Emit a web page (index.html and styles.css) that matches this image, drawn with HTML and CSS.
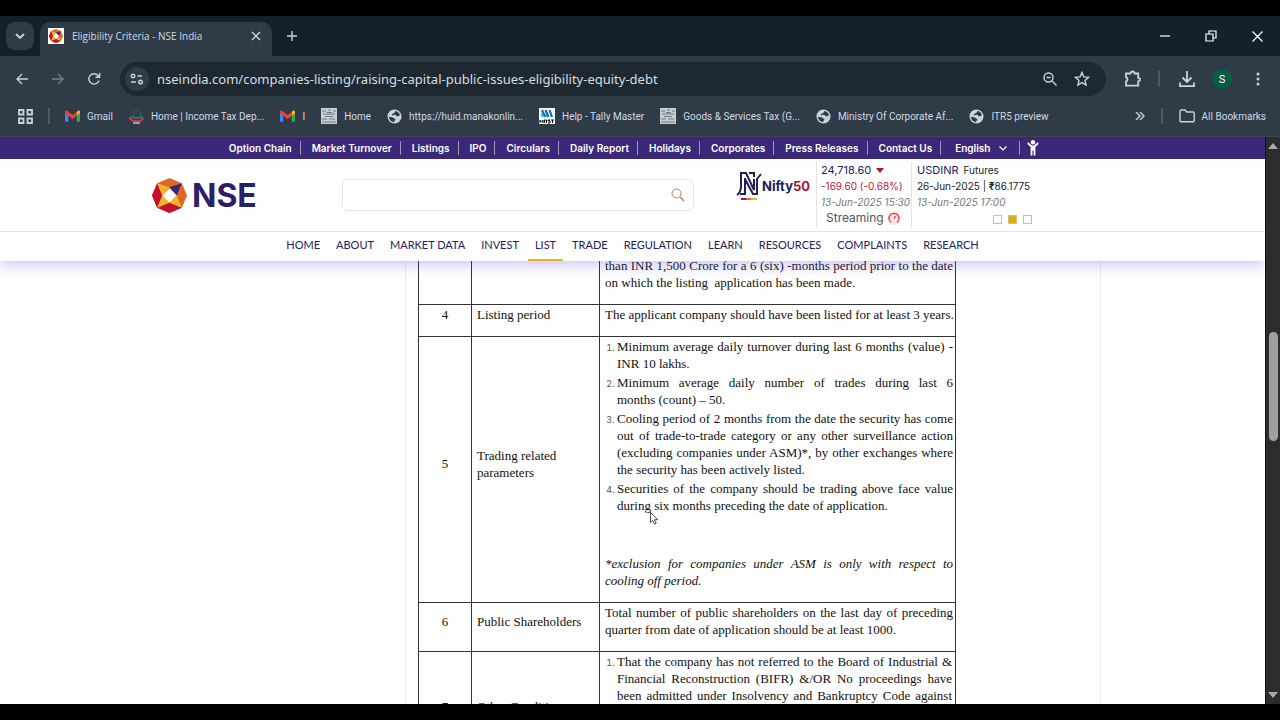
FILE: index.html
```html
<!DOCTYPE html>
<html lang="en">
<head>
<meta charset="utf-8">
<title>Eligibility Criteria - NSE India</title>
<link rel="stylesheet" href="styles.css">
</head>
<body>
<svg class="defs" aria-hidden="true">
  <symbol id="globe" viewBox="0 0 16 16"><circle cx="8" cy="8" r="7.5" fill="#c8d3df"/><path d="M9 2c2.600.4 4.400 2.200 4.800 4.600-1.200.6-2 1.400-3.400 1-1-.4-.8-1.400-2-1.400-1.600 0-1.800.8-3 .6C4.400 6.400 6 5.200 7 4.600 8 4 8.600 3.400 9 2zM2 8.600c1.600-.4 3.600-.2 4.600.6.8.8 1.800.6 2.200 1.400.4 1-.8 1.400-1.400 3.400C4.400 13.600 2.200 11.400 2 8.600z" fill="#303b48"/></symbol>
  <symbol id="gmail" viewBox="0 0 16 12"><path d="M0 1.500V11a1 1 0 0 0 1 1h2.500V4.500z" fill="#4285f4"/><path d="M16 1.500V11a1 1 0 0 1-1 1h-2.500V4.500z" fill="#34a853"/><path d="M12.500 1.500 14 .4c1-.6 2 .1 2 1.200V3l-3.500 2.700z" fill="#fbbc04"/><path d="M3.500 1.500 8 5l4.500-3.500v4.200L8 9.200 3.500 5.700 0 3V1.600C0 .5 1 -.2 2 .4z" fill="#ea4335"/></symbol>
  <symbol id="emblem" viewBox="0 0 16 16"><path fill="#c9ccd0" d="M0 0h16v16H0z"/><path d="M1 3h4M7 2h3M12 3h3M2 6h12M4 8.500h8M1 11h5M8 11h6M1 14h14M6 4.500h5" stroke="#747a82" stroke-width="1.200"/></symbol>
  <symbol id="nse" viewBox="0 0 34 34"><path fill="#dd6826" d="M17 0l12 5 5 12-5 12-12 5-12-5L0 17 5 5z"/><path fill="#c8102e" d="M0 17 5 5l5 12-5 12zM17 34l12-5-12-6-12 6z"/><path fill="#f0b52b" d="m5 5 5 12 7-8zM5 29l5-12 7 7zM29 29l-5-12-7 7z"/><path fill="#38277a" d="M29 5 17 9l7 8z"/><path fill="#fff" d="m17 10 7 7-7 7-7-7z"/></symbol>
</svg>
<div class="window">
  <div class="tabstrip">
    <button class="tab-search" aria-label="Search tabs"><svg width="10" height="7" viewBox="0 0 10 7"><path d="m1 1 4 4 4-4" class="line bold"/></svg></button>
    <div class="tab">
      <span class="favicon"><svg width="14" height="14"><use href="#nse"/></svg></span>
      <span class="tab-title">Eligibility Criteria - NSE India</span>
      <button aria-label="Close tab"><svg width="10" height="10" viewBox="0 0 10 10"><path d="m1 1 8 8M9 1 1 9" class="line"/></svg></button>
    </div>
    <button class="new-tab" aria-label="New tab"><svg width="12" height="12" viewBox="0 0 12 12"><path d="M6 1v10M1 6h10" class="line"/></svg></button>
    <div class="window-controls">
      <button aria-label="Minimise"><svg width="10" height="10" viewBox="0 0 10 10"><path d="M0 5h10" class="line white"/></svg></button>
      <button aria-label="Restore"><svg width="12" height="12" viewBox="0 0 12 12"><path d="M1 4h7v7H1zM4 4V1h7v7H8" class="line white"/></svg></button>
      <button aria-label="Close"><svg width="11" height="11" viewBox="0 0 11 11"><path d="m.5.500 10 10M10.500.500l-10 10" class="line white"/></svg></button>
    </div>
  </div>

  <div class="toolbar">
    <div class="nav-buttons">
      <button aria-label="Back"><svg width="14" height="14" viewBox="0 0 14 14"><path d="M13 7H2M7 2 2 7l5 5" class="line"/></svg></button>
      <button aria-label="Forward" class="dim"><svg width="14" height="14" viewBox="0 0 14 14"><path d="M1 7h11M7 2l5 5-5 5" class="line"/></svg></button>
      <button aria-label="Reload"><svg width="14" height="14" viewBox="0 0 14 14"><path d="M12 8.500A5.200 5.200 0 1 1 11 3.500l1.500 1.600M12.600 1v4.200H8.500" class="line"/></svg></button>
    </div>
    <div class="omnibox">
      <button class="site-info" aria-label="Site information"><svg width="14" height="12" viewBox="0 0 14 12"><circle cx="3" cy="3" r="1.800" class="line"/><path d="M7.500 3H12M1 9h5" class="line"/><circle cx="10.500" cy="9" r="1.800" class="line"/></svg></button>
      <input class="url" aria-label="Address" value="nseindia.com/companies-listing/raising-capital-public-issues-eligibility-equity-debt">
      <button aria-label="Zoom"><svg width="16" height="16" viewBox="0 0 16 16"><circle cx="6.500" cy="6.500" r="4.500" class="line"/><path d="m10 10 4.500 4.500M4.500 6.500h4" class="line"/></svg></button>
      <button aria-label="Bookmark this page"><svg width="16" height="16" viewBox="0 0 16 16"><path d="m8 1.500 1.900 4.400 4.700.4-3.600 3.100 1.100 4.700L8 11.600l-4.100 2.500L5 9.400 1.400 6.300l4.700-.4z" class="line"/></svg></button>
    </div>
    <button class="extensions" aria-label="Extensions"><svg width="18" height="18" viewBox="0 0 18 18"><path d="M2 3.500h4.500a2 2 0 0 1 4 0h3.700v4.300a1.800 1.800 0 0 1 0 3.600v4.300H2v-4.200a2.200 2.200 0 0 0 0-4.200z" class="line bold"/></svg></button>
    <span class="bar"></span>
    <button class="downloads" aria-label="Downloads"><svg width="18" height="18" viewBox="0 0 18 18"><path d="M9 1v10.500M4.500 7.500 9 12l4.500-4.500M2 12.500v3.700h14v-3.700" class="line bold"/></svg></button>
    <button class="avatar" aria-label="Profile">S</button>
    <button class="menu" aria-label="Menu"><svg width="4" height="16" viewBox="0 0 4 16" fill="#c8d3df"><circle cx="2" cy="3" r="1.500"/><circle cx="2" cy="8" r="1.500"/><circle cx="2" cy="13" r="1.500"/></svg></button>
  </div>

  <div class="bookmarks">
    <button class="apps" aria-label="Apps"><svg width="15" height="15" viewBox="0 0 15 15"><path d="M1 1h4.500v4.500H1zM9.500 1H14v4.500H9.500zM1 9.500h4.500V14H1zM9.500 9.500H14V14H9.500z" class="line bold"/></svg></button>
    <span class="bar"></span>
    <a href="#"><svg width="15" height="12"><use href="#gmail"/></svg>Gmail</a>
    <a href="#"><svg width="15" height="15" viewBox="0 0 15 15"><circle cx="8" cy="5" r="3.700" fill="none" stroke="#24615f" stroke-width="1.500" stroke-dasharray="2 1"/><path d="M2 7c2 3 9 3 11.500 0" stroke="#1f9a62" stroke-width="1.200" fill="none"/><path d="M.5 8.500c2 5 12 5 14 0" stroke="#e83e4a" stroke-width="1.800" fill="none"/><path d="M4 14h7" stroke="#f3dcdc" stroke-width="1.200"/></svg>Home | Income Tax Dep...</a>
    <a href="#"><svg width="15" height="12"><use href="#gmail"/></svg>I</a>
    <a href="#"><svg width="16" height="16"><use href="#emblem"/></svg>Home</a>
    <a href="#"><svg width="15" height="15"><use href="#globe"/></svg>https://huid.manakonlin...</a>
    <a href="#"><svg width="16" height="16" viewBox="0 0 16 16"><path fill="#f4f8fa" d="M0 0h16v16H0z"/><path d="m3 2 3 7M6.500 2l3 7M10.500 2l2.500 7" stroke="#176eaa" stroke-width="2.200"/><path d="M3 5v4M7 5v4" stroke="#1aa5c9" stroke-width="1.500"/><path d="M1 15v-3l1.500 2L4 12v3m1.500 0v-3h2v3M9 15h2v-2H9v-1h2m1 0h3m-1.500 0v3" stroke="#111" fill="none"/></svg>Help - Tally Master</a>
    <a href="#"><svg width="16" height="16"><use href="#emblem"/></svg>Goods &amp; Services Tax (G...</a>
    <a href="#"><svg width="15" height="15"><use href="#globe"/></svg>Ministry Of Corporate Af...</a>
    <a href="#"><svg width="15" height="15"><use href="#globe"/></svg>ITR5 preview</a>
    <div class="bookmarks-end">
      <button aria-label="More bookmarks"><svg width="10" height="8" viewBox="0 0 10 8"><path d="m1 0 4 4-4 4M5 0l4 4-4 4" class="line"/></svg></button>
      <span class="bar"></span>
      <a href="#"><svg width="16" height="14" viewBox="0 0 16 14"><path d="M1 2.500c0-.8.4-1.500 1.200-1.500H6l1.800 2H14c.7 0 1.200.5 1.200 1.200v7.300c0 .8-.5 1.300-1.200 1.300H2.200c-.7 0-1.200-.5-1.200-1.300z" class="line"/></svg>All Bookmarks</a>
    </div>
  </div>

  <div class="viewport">
    <div class="page">
      <header class="site-header">
        <nav class="utility" aria-label="Quick links">
          <a href="#">Option Chain</a><a href="#">Market Turnover</a><a href="#">Listings</a><a href="#">IPO</a><a href="#">Circulars</a><a href="#">Daily Report</a><a href="#">Holidays</a><a href="#">Corporates</a><a href="#">Press Releases</a><a href="#">Contact Us</a>
          <span class="language"><select aria-label="Language"><option>English</option></select><svg width="8" height="5" viewBox="0 0 8 5"><path d="m.5.500 3.500 3.500 3.500-3.500" class="line white"/></svg></span>
          <button aria-label="Accessibility"><svg width="12" height="16" viewBox="0 0 12 16"><circle cx="6" cy="2.300" r="2.200" fill="#fff"/><path d="m.8 3 3.700 3.500v9M11.200 3 7.500 6.500v9M6 5.500v5" fill="none" stroke="#fff" stroke-width="1.800"/></svg></button>
        </nav>
        <div class="masthead">
          <a class="logo" href="#"><svg width="35" height="35"><use href="#nse"/></svg>NSE</a>
          <form class="search"><input type="text" aria-label="Search"><button type="button" aria-label="Search"><svg width="14" height="14" viewBox="0 0 14 14"><circle cx="5.500" cy="5.500" r="4.500" fill="none" stroke="#c77743"/><path d="m9 9 4 4" stroke="#c77743" stroke-width="1.300"/></svg></button></form>
          <div class="nifty"><svg width="26" height="30" viewBox="0 0 26 30"><path d="M1 24c3-2 4-5 4-9V2h5l8 17V8M9 7v16H4M13 2h5v4M9 8l8 15h4V8l4-5" fill="none" stroke="#23205c" stroke-width="2"/><path d="M5 28h5" stroke="#9c1b31" stroke-width="2"/><path d="M10 28h5" stroke="#dc6827" stroke-width="2"/><path d="M15 28h6" stroke="#e6b52c" stroke-width="2"/></svg><b>Nifty<i>50</i></b></div>
          <div class="quote">
            <div class="price">24,718.60 <svg width="8" height="5" viewBox="0 0 8 5"><path d="M0 0h8L4 5z" fill="#b3142c"/></svg></div>
            <div class="change">-169.60 (-0.68%)</div>
            <div class="stamp">13-Jun-2025 15:30</div>
            <div class="streaming">Streaming <svg width="14" height="14" viewBox="0 0 14 14"><circle cx="7" cy="7" r="7" fill="#fde4e4"/><path d="M4.300 11.500a5 5 0 1 1 5.400 0M7 8l1.500-3" fill="none" stroke="#d64550" stroke-width="1.300"/></svg></div>
          </div>
          <div class="quote">
            <div class="price">USDINR <small>Futures</small></div>
            <div class="rate">26-Jun-2025 | <b>₹</b>86.1775</div>
            <div class="stamp">13-Jun-2025 17:00</div>
            <div class="dots"><button aria-label="Slide 1"></button><button class="on" aria-label="Slide 2"></button><button aria-label="Slide 3"></button></div>
          </div>
        </div>
        <nav class="main-nav" aria-label="Main">
          <a href="#">HOME</a><a href="#">ABOUT</a><a href="#">MARKET DATA</a><a href="#">INVEST</a><a href="#" class="current">LIST</a><a href="#">TRADE</a><a href="#">REGULATION</a><a href="#">LEARN</a><a href="#">RESOURCES</a><a href="#">COMPLAINTS</a><a href="#">RESEARCH</a>
        </nav>
      </header>
      <main>
        <article>
          <table>
            <colgroup><col class="c-no"><col class="c-name"><col></colgroup>
            <tbody>
              <tr><td></td><td></td><td><p>than INR 1,500 Crore for a 6 (six) -months period prior to the date on which the listing&nbsp; application has been made.</p></td></tr>
              <tr><td>4</td><td>Listing period</td><td><p class="single">The applicant company should have been listed for at least 3 years.</p></td></tr>
              <tr><td>5</td><td>Trading related parameters</td><td>
                <ol>
                  <li>Minimum average daily turnover during last 6 months (value) - INR 10 lakhs.</li>
                  <li>Minimum average daily number of trades during last 6 months&nbsp;(count) – 50.</li>
                  <li>Cooling period of 2 months from the date the security has come out of trade-to-trade category or any other surveillance action (excluding companies under ASM)*, by other exchanges where the security has been actively listed.</li>
                  <li>Securities of the company should be trading above face value during six months preceding the date of application.</li>
                </ol>
                <p class="footnote">*exclusion for companies under ASM is only with respect to cooling off period.</p></td></tr>
              <tr><td>6</td><td>Public Shareholders</td><td><p>Total number of public shareholders on the last day of preceding quarter from date of application should be at least 1000.</p></td></tr>
              <tr class="last"><td>7</td><td>Other Conditions</td><td><ol><li>That the company has not referred to the Board of Industrial &amp; Financial Reconstruction (BIFR) &amp;/OR No proceedings have been admitted under Insolvency and Bankruptcy Code against</li></ol></td></tr>
            </tbody>
          </table>
        </article>
      </main>
    </div>
    <div class="scrollbar"><svg width="10" height="6" viewBox="0 0 10 6"><path d="M0 6 5 0l5 6z" fill="#a9a9a9"/></svg><span class="thumb"></span><svg class="down" width="10" height="6" viewBox="0 0 10 6"><path d="m0 0 5 6 5-6z" fill="#a9a9a9"/></svg></div>
  </div>
</div>
<svg class="cursor" width="9" height="13" viewBox="0 0 9 13"><path d="M.5.500v10l2.300-2.200 1.700 3.800 1.700-.8-1.600-3.600h3.200z" fill="#fff" stroke="#222" stroke-width=".8"/></svg>
</body>
</html>
```
FILE: styles.css
```css
* { box-sizing: border-box; }
html, body { height: 100%; }
body {
  margin: 0;
  padding: 16px 0;
  background: #000;
  font-family: Roboto, "Open Sans", sans-serif;
  overflow: hidden;
}
button, input, select { font: inherit; color: inherit; background: none; border: 0; padding: 0; margin: 0; }
button { display: flex; align-items: center; justify-content: center; }
a { color: inherit; text-decoration: none; }
svg { display: block; flex: none; }
.defs { position: absolute; width: 0; height: 0; }
.line { fill: none; stroke: #c8d3df; stroke-width: 1.4; }
.line.bold { stroke-width: 1.8; }
.line.white { stroke: #fff; stroke-width: 1.2; }
.bar { flex: none; width: 2px; height: 16px; background: #4c5865; }

.window { height: 100%; display: flex; flex-direction: column; background: #303b48; color: #cfd9e4; overflow: hidden; }

.tabstrip { display: flex; height: 40px; padding: 6px 0 0 6px; background: #15202d; }
.tab-search { width: 28px; height: 28px; border-radius: 9px; background: #303b48; }
.tab { display: flex; align-items: center; width: 232px; height: 34px; margin-left: 6px; padding: 0 11px 6px 8px; gap: 8px; background: #303b48; border-radius: 10px 10px 0 0; font-family: "Open Sans", sans-serif; font-size: 10px; }
.tab-title { flex: 1; white-space: nowrap; }
.favicon { display: flex; align-items: center; justify-content: center; width: 16px; height: 16px; background: #fff; }
.favicon svg, .logo svg { overflow: visible; }
.new-tab { width: 40px; height: 28px; }
.window-controls { display: flex; margin-left: auto; }
.window-controls button { width: 46px; height: 28px; }

.toolbar { display: flex; align-items: center; height: 44px; padding: 2px 20px 0 4px; flex: none; }
.nav-buttons { display: flex; }
.nav-buttons button { width: 36px; height: 34px; }
.dim { opacity: .45; }
.omnibox { flex: 1; display: flex; align-items: center; height: 34px; margin: 0 18px 0 8px; padding: 0 16px 0 5px; border-radius: 17px; background: #1d2831; gap: 16px; }
.site-info { width: 24px; height: 24px; border-radius: 12px; background: #303b48; }
.url { flex: 1; min-width: 0; margin-left: -8px; font-family: "Noto Sans", sans-serif; font-size: 13px; color: #d5dee6; outline: 0; }
.extensions { width: 18px; margin-right: 16px; }
.downloads { width: 18px; margin: 0 16px 0 18px; }
.avatar { width: 20px; height: 20px; border-radius: 50%; background: #075c43; color: #fff; font-size: 11px; margin-right: 24px; }

.bookmarks { display: flex; align-items: center; height: 37px; padding: 0 14px 4px 18px; gap: 16px; font-size: 10px; flex: none; white-space: nowrap; border-bottom: 1px solid #3c4552; }
.bookmarks > .bar { margin: 0 -1px; }
.bookmarks a { display: flex; align-items: center; gap: 7px; }
.bookmarks-end { display: flex; align-items: center; gap: 16px; margin-left: auto; }

.viewport { flex: 1; min-height: 0; display: flex; }
.page { flex: 1; min-width: 0; display: flex; flex-direction: column; background: #fff; color: #23205c; font-family: Inter, "Open Sans", sans-serif; overflow: hidden; }
.scrollbar { display: flex; flex-direction: column; align-items: center; width: 15px; padding: 6px 0; background: #2c2c2c; border-left: 1px solid #111; }
.thumb { width: 9px; height: 109px; margin-top: 183px; border-radius: 5px; background: #9f9f9f; }
.down { margin-top: auto; }

.site-header { position: relative; z-index: 1; background: #fff; box-shadow: 0 3px 14px #6a50e060; flex: none; }
.utility { display: flex; align-items: center; justify-content: center; height: 22px; padding-right: 8px; background: #3a2878; color: #fff; font-size: 10px; font-weight: 600; white-space: nowrap; }
.utility a, .language { display: flex; align-items: center; height: 14px; padding: 0 8px 0 11px; border-right: 1px solid #9d94bc; }
.language { gap: 8px; padding: 0 12px 0 14px; margin-right: 7px; }
.language select { appearance: none; outline: 0; }

.masthead { display: flex; width: 961px; max-width: 100%; height: 72px; margin: 0 auto; }
.logo { display: flex; align-items: center; gap: 5px; width: 190px; font-size: 32px; font-weight: 700; color: #2b2068; }
.search { display: flex; align-items: center; align-self: center; flex: 1; max-width: 352px; height: 32px; padding-right: 8px; border: 1px solid #e6e6e8; border-radius: 6px; }
.search input { flex: 1; height: 30px; outline: 0; }
.nifty { display: flex; align-items: center; width: 80px; height: 50px; margin: 2px 0 0 42px; font-size: 13px; }
.nifty i { font-style: normal; color: #a91532; }
.quote { width: 95px; height: 66px; margin-top: 3px; padding-left: 4px; border-left: 1px solid #e4e4e8; white-space: nowrap; font-size: 10px; line-height: 16px; }
.quote + .quote { width: 121px; padding-left: 5px; }
.price { display: flex; align-items: center; gap: 5px; font-size: 11px; }
.price small { font-size: 10px; color: #222; }
.change { color: #b3213c; }
.rate { color: #222; }
.stamp { font-style: italic; color: #777; }
.streaming { display: flex; align-items: center; gap: 3px; padding-left: 5px; font-size: 12px; color: #555; }
.dots { display: flex; justify-content: flex-end; gap: 6px; padding-top: 5px; }
.dots button { width: 9px; height: 9px; border: 1px solid #cfc56f; }
.dots .on { background: #d9ad1c; }

.main-nav { display: flex; justify-content: center; gap: 2px; height: 30px; border-top: 1px solid #e4e4e8; font-family: Lato, sans-serif; font-size: 11px; white-space: nowrap; }
.main-nav a { padding: 6px 7px 0; }
.main-nav .current { border-bottom: 2px solid #e0b238; }

main { display: grid; grid-template-columns: 405px 696px; }
article { grid-column: 2; padding-left: 12px; border: solid #ececf0; border-width: 0 1px; }
table { width: 538px; margin-top: -6px; border-collapse: collapse; table-layout: fixed; color: #111; font-family: "Liberation Serif", serif; font-size: 13px; line-height: 17px; }
.c-no { width: 53px; }
.c-name { width: 128px; }
td { padding: 1px 2px 13px 5px; border: 1px solid #333; }
td:first-child { padding-left: 2px; text-align: center; }
p { margin: 0; text-align: justify; }
.single { white-space: nowrap; }
ol { margin: 0; padding-left: 12px; text-align: justify; }
li { margin-bottom: 2px; }
li::marker { font-family: Inter, sans-serif; font-size: 9px; color: #555; }
.footnote { margin-top: 41px; font-style: italic; }
.last { height: 121px; vertical-align: middle; }
.last td:last-child { vertical-align: top; }
.last ol { padding-right: 1px; text-align-last: justify; }

.cursor { position: absolute; left: 650px; top: 512px; }
```
